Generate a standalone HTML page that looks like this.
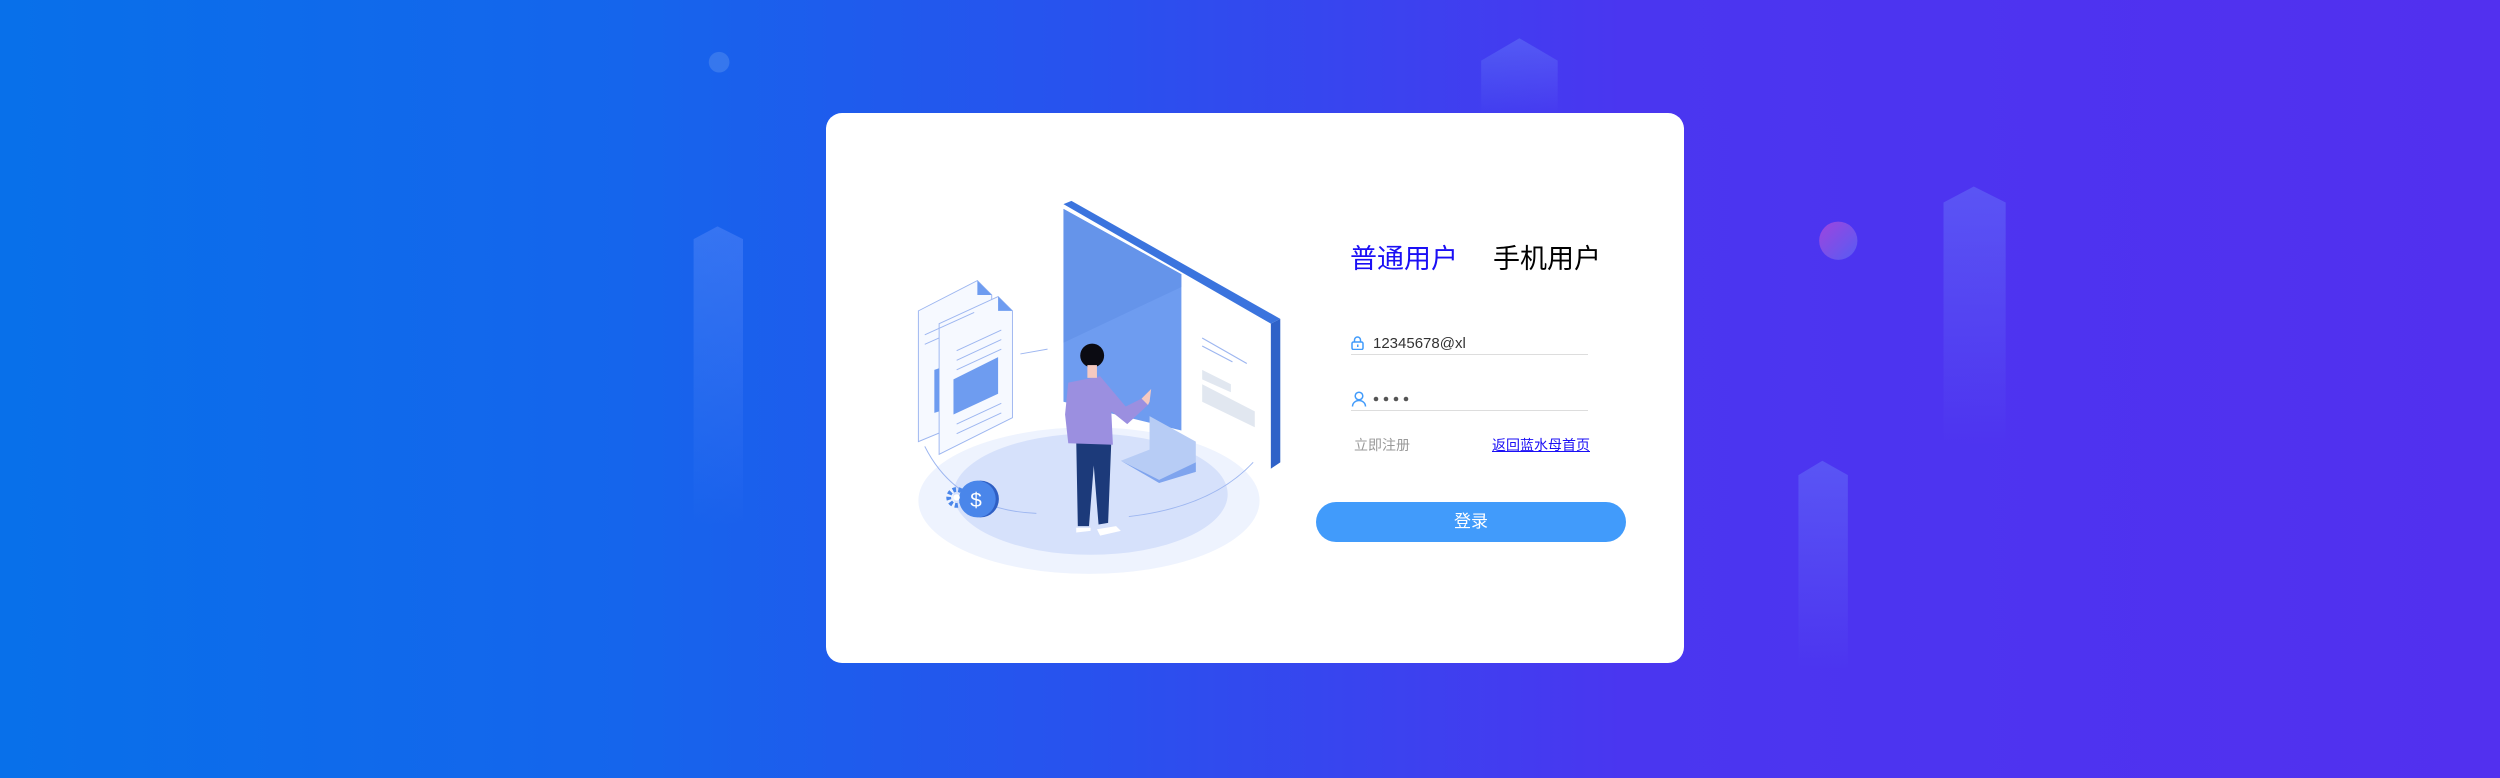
<!DOCTYPE html>
<html><head><meta charset="utf-8"><style>
html,body{margin:0;padding:0}
body{width:2500px;height:778px;overflow:hidden;position:relative;background:linear-gradient(90deg,#0870ea 0%,#1565ec 25%,#2a50ee 45%,#4a36f0 65%,#5230ef 100%);font-family:"Liberation Sans","Noto Sans CJK SC",sans-serif}
svg.bg{position:absolute;left:0;top:0}
.card{position:absolute;left:826px;top:113px;width:858px;height:550px;background:#fff;border-radius:16px}
.t{position:absolute;white-space:nowrap;line-height:1}
</style></head><body>
<svg class="bg" width="2500" height="778" viewBox="0 0 1568 488">
<defs>
<linearGradient id="p" x1="0" y1="0" x2="0" y2="1"><stop offset="0" stop-color="#7aa0ff" stop-opacity=".3"/><stop offset="1" stop-color="#7aa0ff" stop-opacity="0"/></linearGradient>
<linearGradient id="pk" x1="0" y1="0" x2="1" y2="1"><stop offset="0" stop-color="#c24bd6"/><stop offset="1" stop-color="#5a6df5"/></linearGradient>
</defs>
<circle cx="451" cy="39" r="6.5" fill="#4a86ee" opacity=".6"/>
<circle cx="1153" cy="151" r="12" fill="url(#pk)" opacity=".7"/>
<polygon points="435,150 450,142 466,150 466,330 435,330" fill="url(#p)"/>
<polygon points="929,38 953,24 977,38 977,72 929,72" fill="url(#p)"/>
<polygon points="1219,127 1238,117 1258,127 1258,280 1219,280" fill="url(#p)"/>
<polygon points="1128,298 1143,289 1159,298 1159,420 1128,420" fill="url(#p)"/>
</svg>
<div class="card"></div>
<svg class="bg" width="2500" height="778" viewBox="0 0 1568 488">
<ellipse cx="683" cy="314" rx="107" ry="46" fill="#eef3fe"/>
<ellipse cx="684" cy="310" rx="86" ry="38" fill="#d6e1fb"/>
<path d="M580 280 Q600 320 650 322 M708 324 Q760 318 786 290" stroke="#9db6f0" stroke-width=".6" fill="none"/>
<path d="M640 222 L657 219" stroke="#9db6f0" stroke-width=".6"/>
<polygon points="667,128 672,126 803,200 797,203" fill="#3b74de"/>
<polygon points="797,203 803,200 803,290 797,294" fill="#2f62c8"/>
<polygon points="667,131 741,172 741,270 667,252" fill="#6e9cf0"/>
<polygon points="667,131 741,172 741,180 667,215" fill="#6594ea"/>
<polygon points="741,172 797,203 797,294 741,270" fill="#fff"/>
<path d="M754 212 L782 228 M754 217 L773 227" stroke="#9db6f0" stroke-width=".7"/>
<polygon points="754,232 772,241 772,246 754,238" fill="#e1e7f0"/>
<polygon points="754,241 787,258 787,268 754,252" fill="#e1e7f0"/>
<polygon points="721,261 750,277 750,296 727,301 703,289 721,282" fill="#b7ccf5"/>
<polygon points="703,289 727,301 750,290 750,296 727,303" fill="#7fa4ee"/>
<polygon points="576,195 613,176 622,185 622,258 576,277" fill="#f6f9ff" stroke="#9db6f0" stroke-width=".6"/>
<polygon points="613,176 622,185 613,185" fill="#6e9cf0"/>
<polygon points="589,203 626,186 635,195 635,262 589,285" fill="#f6f9ff" stroke="#9db6f0" stroke-width=".6"/>
<polygon points="626,186 635,195 626,195" fill="#6e9cf0"/>
<polygon points="598,238 626,224 626,247 598,260" fill="#6e9cf0"/>
<polygon points="586,232 589,231 589,258 586,259" fill="#6e9cf0"/>
<path d="M600 220 L628 207 M600 226 L628 213 M600 232 L628 219 M600 266 L628 253 M600 272 L628 259 M580 210 L611 196 M580 216 L589 212" stroke="#9db6f0" stroke-width=".6"/>
<circle cx="615" cy="313" r="11.5" fill="#2f5fc4"/>
<circle cx="613" cy="313" r="11.5" fill="#4a86ea"/>
<text x="608.5" y="318" font-size="13" fill="#fff" font-family="Liberation Sans">$</text>
<circle cx="600" cy="312" r="5" fill="none" stroke="#4a86ea" stroke-width="3" stroke-dasharray="2 1.5"/>
<circle cx="600" cy="312" r="2" fill="#fff"/>
<polygon points="675,276 697,277 695,328 689,329 686,292 683,330 676,330" fill="#1c3a7a"/>
<polygon points="670,240 690,236 706,255 716,250 720,254 707,266 697,258 698,279 670,278 668,260" fill="#9b8fe0"/>
<polygon points="716,250 722,244 721,252 720,254" fill="#f5c9c0"/>
<circle cx="685" cy="223" r="7.5" fill="#0b0b12"/>
<rect x="682" y="229" width="6" height="8" fill="#f5c9c0"/>
<path d="M675 331 L684 331 L684 333 L675 334 Z M688 332 L700 330 L703 333 L690 336 Z" fill="#fff"/>
</svg>
<div class="t" style="left:1350px;top:246px;font-size:27px;color:#1b0ff5">普通用户</div>
<div class="t" style="left:1493px;top:246px;font-size:27px;color:#000">手机用户</div>
<svg style="position:absolute;left:1351px;top:336px" width="13" height="14" viewBox="0 0 13 14"><rect x="1" y="6" width="11" height="7.5" rx="1.5" fill="none" stroke="#419bfb" stroke-width="1.5"/><path d="M3.5 6V4a3 3 0 0 1 6 0v2" fill="none" stroke="#419bfb" stroke-width="1.5"/><rect x="6" y="8.5" width="1.5" height="2.5" fill="#419bfb"/></svg>
<div class="t" style="left:1373px;top:336px;font-size:15px;color:#333">12345678@xl</div>
<div style="position:absolute;left:1351px;top:354px;width:237px;height:1px;background:#ddd"></div>
<svg style="position:absolute;left:1351px;top:391px" width="16" height="16" viewBox="0 0 16 16"><circle cx="8" cy="5" r="3.8" fill="none" stroke="#419bfb" stroke-width="1.5"/><path d="M1.5 15.5a6.5 6 0 0 1 13 0" fill="none" stroke="#419bfb" stroke-width="1.5"/></svg>
<svg style="position:absolute;left:1373px;top:395px" width="40" height="8"><g fill="#555"><circle cx="3" cy="4" r="2.3"/><circle cx="13" cy="4" r="2.3"/><circle cx="23" cy="4" r="2.3"/><circle cx="33" cy="4" r="2.3"/></g></svg>
<div style="position:absolute;left:1351px;top:410px;width:237px;height:1px;background:#ddd"></div>
<div class="t" style="left:1354px;top:438px;font-size:14px;color:#999">立即注册</div>
<div class="t" style="left:1492px;top:438px;font-size:14px;color:#1b0ff5;text-decoration:underline">返回蓝水母首页</div>
<div style="position:absolute;left:1316px;top:502px;width:310px;height:40px;border-radius:20px;background:#419bfb;color:#fff;font-size:17px;line-height:40px;text-align:center">登录</div>
</body></html>
